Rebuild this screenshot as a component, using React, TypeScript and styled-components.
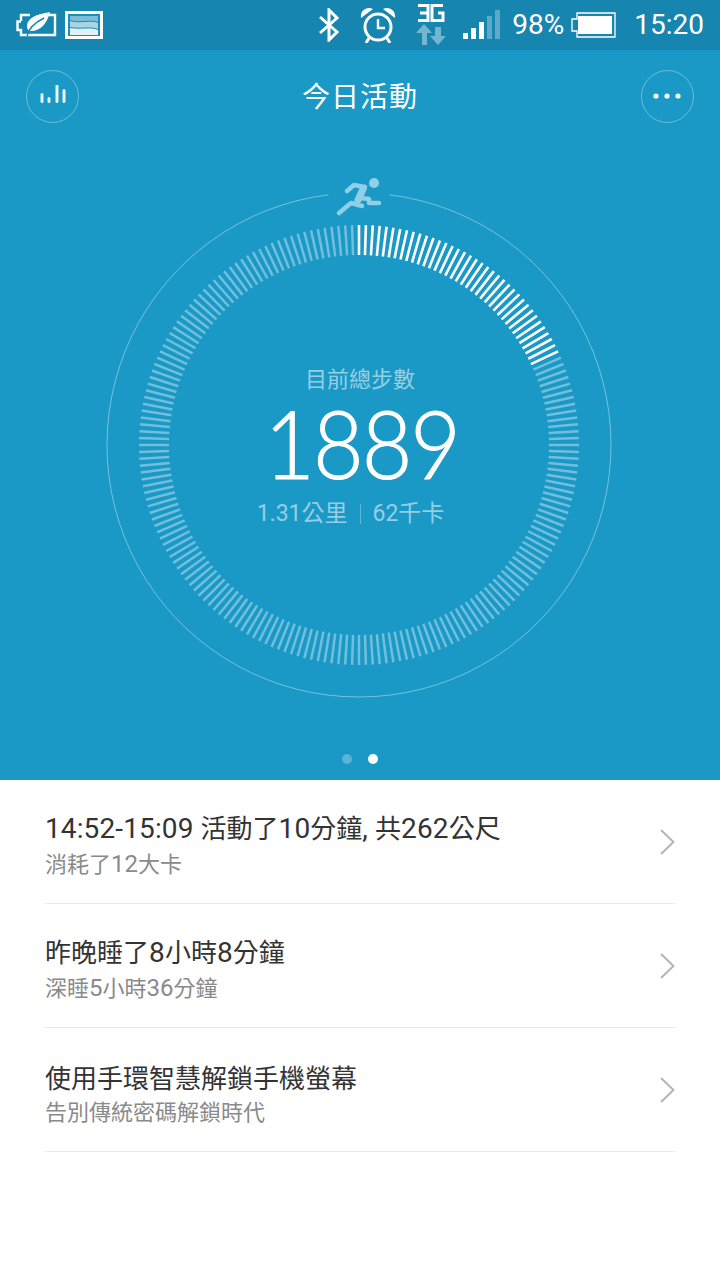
import styled, { createGlobalStyle } from 'styled-components';

const GlobalStyle = createGlobalStyle`
  html, body { margin: 0; padding: 0; background: #fff; }
  body { font-family: Roboto, "Noto Sans CJK TC", sans-serif; }
`;

const Page = styled.div`
  width: 720px;
  height: 1280px;
  overflow: hidden;
  display: flex;
  flex-direction: column;
  background: #fff;
`;

const StatusBar = styled.div`
  height: 50px;
  flex: none;
  padding-right: 16px;
  background: #1686b0;
  display: flex;
  align-items: center;
  color: #fff;
`;

const StatusIcon = styled.svg<{ $left: number }>`
  display: block;
  flex: none;
  margin-left: ${(p) => p.$left}px;
`;

const StatusText = styled.span<{ $left: number }>`
  font: 400 28px Roboto, sans-serif;
  margin-left: ${(p) => p.$left}px;
  line-height: 50px;
  margin-top: -1px;
`;

const Spacer = styled.div`
  flex: 1;
`;

const Hero = styled.section`
  height: 730px;
  flex: none;
  background: #1a98c6;
  display: flex;
  flex-direction: column;
  align-items: center;
`;

const TopBar = styled.header`
  width: 100%;
  box-sizing: border-box;
  height: 92px;
  padding: 0 26px;
  display: flex;
  align-items: center;
  justify-content: space-between;
`;

const RoundButton = styled.button`
  width: 53px;
  height: 53px;
  padding: 0;
  border-radius: 50%;
  border: 1px solid rgba(255, 255, 255, 0.35);
  background: transparent;
  display: flex;
  align-items: center;
  justify-content: center;
`;

const Title = styled.h1`
  margin: -2px 0 0;
  font: 400 28px "Noto Sans CJK TC", sans-serif;
  letter-spacing: 1px;
  color: #fff;
`;

const RingArea = styled.div`
  position: relative;
  width: 520px;
  height: 520px;
  margin-top: 43px;
  display: flex;
  flex-direction: column;
  align-items: center;
`;

const RingSvg = styled.svg`
  position: absolute;
  left: -1px;
  top: 0;
  overflow: visible;
`;

const RingLabel = styled.div`
  position: relative;
  margin-top: 176px;
  font: 400 22px/32px "Noto Sans CJK TC", sans-serif;
  color: rgba(255, 255, 255, 0.55);
`;

const StepCount = styled.div`
  position: relative;
  margin-top: 4px;
  margin-left: 3px;
  font: 300 94px/92px Lato, sans-serif;
  letter-spacing: -2.2px;
  -webkit-text-stroke: 0.9px #fff;
  color: #fff;
  transform: scaleX(0.93);
`;

const RingStats = styled.div`
  position: relative;
  width: 100%;
  margin-top: 10px;
  display: grid;
  grid-template-columns: 1fr auto 1fr;
  align-items: center;
  font: 400 23px/30px Roboto, "Noto Sans CJK TC", sans-serif;
  color: rgba(255, 255, 255, 0.55);
`;

const StatLeft = styled.span`
  text-align: right;
`;

const StatDivider = styled.span`
  width: 1px;
  height: 20px;
  margin: 0 12px;
  background: rgba(255, 255, 255, 0.3);
`;

const Pager = styled.div`
  margin-top: 49px;
  display: flex;
  gap: 16px;
`;

const PagerDot = styled.span<{ $active?: boolean }>`
  width: 10px;
  height: 10px;
  border-radius: 50%;
  background: ${(p) => (p.$active ? '#fff' : 'rgba(255, 255, 255, 0.28)')};
`;

const List = styled.ul`
  margin: 0;
  padding: 0 45px;
  list-style: none;
`;

const Row = styled.li`
  height: 124px;
  box-sizing: border-box;
  border-bottom: 1px solid #e8e8e8;
  display: flex;
  align-items: center;
  justify-content: space-between;
`;

const RowText = styled.div`
  padding-top: 5px;
  display: flex;
  flex-direction: column;
`;

const RowTitle = styled.div`
  font: 400 26px/36px "Noto Sans CJK TC", sans-serif;
  color: #333;
`;

const RowSub = styled.div`
  margin-top: -1px;
  font: 400 22px/32px "Noto Sans CJK TC", sans-serif;
  color: #8a8a8a;
`;

const TitleLatin = styled.span`
  font: 400 28px/36px Roboto, sans-serif;
  letter-spacing: 0.12px;
`;

const SubLatin = styled.span`
  font: 400 24px/32px Roboto, sans-serif;
`;

const Chevron = styled.svg`
  display: block;
  flex: none;
`;

const C = 260;
const TICKS = 200;
const DONE = 37;

function Ticks() {
  const lines = [];
  for (let i = 0; i < TICKS; i++) {
    const a = (i / TICKS) * Math.PI * 2;
    const s = Math.sin(a);
    const c = Math.cos(a);
    const on = i < DONE;
    lines.push(
      <line
        key={i}
        x1={C + s * 190}
        y1={C - c * 190}
        x2={C + s * 220}
        y2={C - c * 220}
        stroke="#fff"
        strokeOpacity={on ? 1 : 0.38}
        strokeWidth={on ? 2.6 : 2.5}
      />
    );
  }
  return <>{lines}</>;
}

function polar(r: number, deg: number) {
  const a = (deg * Math.PI) / 180;
  return `${C + Math.sin(a) * r} ${C - Math.cos(a) * r}`;
}

// digits and latin run bigger than the CJK in this font pairing
function mixed(text: string, Latin: typeof TitleLatin) {
  return text.split(/([\x00-\x7f]+)/).map((part, i) =>
    i % 2 ? <Latin key={i}>{part}</Latin> : part
  );
}

const rows = [
  { title: '14:52-15:09 活動了10分鐘, 共262公尺', sub: '消耗了12大卡' },
  { title: '昨晚睡了8小時8分鐘', sub: '深睡5小時36分鐘' },
  { title: '使用手環智慧解鎖手機螢幕', sub: '告別傳統密碼解鎖時代' },
];

export default function App() {
  return (
    <Page>
      <GlobalStyle />
      <StatusBar>
        <StatusIcon $left={16} width="41" height="26" viewBox="0 0 41 26">
          <path d="M5 9V3h9M28 3h11v20H5v-5H1.500V9.500H5" fill="none" stroke="#fff" strokeWidth="2.4" />
          <path d="M34 0C24 2 12 4 11 14c0 2 1 4 2 5C25 20 31 11 34 0z" fill="#fff" />
          <path d="M28 6C20 10 13 15 11 24" fill="none" stroke="#1686b0" strokeWidth="1.4" />
        </StatusIcon>
        <StatusIcon $left={8} width="38" height="28" viewBox="0 0 38 28">
          <rect x="1.500" y="1.500" width="35" height="25" fill="#1b8fb8" stroke="#fff" strokeWidth="3" />
          <path d="M5 5h28v6C26 8 14 12 5 9z" fill="#7dbdd6" />
          <path d="M5 10c9 3 21-1 28 2v6C26 15 14 18 5 16z" fill="#a9d4e5" />
          <path d="M5 17c9 2 21-1 28 2v5H5z" fill="#e2f1f6" />
        </StatusIcon>
        <Spacer />
        <StatusIcon $left={0} width="22" height="34" viewBox="0 0 22 34">
          <path d="M2 9l17 15-8 8V2l8 8L2 25" fill="none" stroke="#fff" strokeWidth="3" />
        </StatusIcon>
        <StatusIcon $left={20} width="36" height="36" viewBox="0 0 36 36">
          <circle cx="18" cy="20" r="13" fill="none" stroke="#fff" strokeWidth="3" />
          <path d="M18 12v9h7" fill="none" stroke="#fff" strokeWidth="2.400" />
          <path d="M1 11C0 4 6-1 13 2zM35 11c1-7-5-12-12-9z" fill="#fff" />
          <path d="M9 31l-3 5M27 31l3 5" stroke="#fff" strokeWidth="3" />
        </StatusIcon>
        <StatusIcon $left={20} width="30" height="42" viewBox="0 0 30 42">
          <path d="M2 1.500h10v15H2M4 9h8M27 1.500H16v15h11V9h-5" fill="none" stroke="#fff" strokeWidth="3" />
          <path d="M8 20l8 9h-5v12H6V29H0z" fill="#fff" fillOpacity="0.4" />
          <path d="M22 41l8-9h-5V23h-6v9h-5z" fill="#fff" fillOpacity="0.4" />
        </StatusIcon>
        <StatusIcon $left={17} width="38" height="30" viewBox="0 0 38 30">
          <rect x="0" y="23" width="5" height="6" fill="#fff" />
          <rect x="8" y="18" width="5" height="11" fill="#fff" />
          <rect x="16" y="12" width="5" height="17" fill="#fff" />
          <rect x="24" y="6" width="5" height="23" fill="#fff" fillOpacity="0.3" />
          <rect x="32" y="0" width="5" height="29" fill="#fff" fillOpacity="0.3" />
        </StatusIcon>
        <StatusText $left={11}>98%</StatusText>
        <StatusIcon $left={7} width="46" height="26" viewBox="0 0 46 26">
          <path d="M6 7V1h38v24H6v-6H1V7z" fill="none" stroke="#fff" strokeWidth="1.300" />
          <rect x="7" y="4" width="34" height="18" fill="#fff" />
        </StatusIcon>
        <StatusText $left={17}>15:20</StatusText>
      </StatusBar>

      <Hero>
        <TopBar>
          <RoundButton aria-label="stats">
            <svg width="28" height="22" viewBox="0 0 28 22">
              <path d="M3 9.500v7M10 13.500v3M18 .5v16M25 5.500v11" stroke="#fff" strokeOpacity="0.9" strokeWidth="3" strokeLinecap="round" />
            </svg>
          </RoundButton>
          <Title>今日活動</Title>
          <RoundButton aria-label="more">
            <svg width="28" height="6" viewBox="0 0 28 6">
              <circle cx="3" cy="3" r="2.600" fill="#fff" />
              <circle cx="14" cy="3" r="2.600" fill="#fff" />
              <circle cx="25" cy="3" r="2.600" fill="#fff" />
            </svg>
          </RoundButton>
        </TopBar>

        <RingArea>
          <RingSvg width="520" height="520" viewBox="0 0 520 520">
            <path
              d={`M ${polar(252, 7)} A 252 252 0 1 1 ${polar(252, -7)}`}
              fill="none"
              stroke="#fff"
              strokeOpacity="0.4"
              strokeWidth="1"
            />
            <Ticks />
            <g fill="none" stroke="#8fd0e6" strokeWidth="4.500" strokeLinecap="round" strokeLinejoin="round">
              <path d="M248 6l7-6 11 2-5 11 9 1v4h10" />
              <path d="M240 28l12-10 11 3" />
              <path d="M264 4l-5 11" strokeWidth="7" />
            </g>
            <circle cx="275" cy="-2" r="5" fill="#8fd0e6" />
          </RingSvg>
          <RingLabel>目前總步數</RingLabel>
          <StepCount>1889</StepCount>
          <RingStats>
            <StatLeft>1.31公里</StatLeft>
            <StatDivider />
            <span>62千卡</span>
          </RingStats>
        </RingArea>

        <Pager>
          <PagerDot />
          <PagerDot $active />
        </Pager>
      </Hero>

      <List>
        {rows.map((r) => (
          <Row key={r.title}>
            <RowText>
              <RowTitle>{mixed(r.title, TitleLatin)}</RowTitle>
              <RowSub>{mixed(r.sub, SubLatin)}</RowSub>
            </RowText>
            <Chevron width="15" height="26" viewBox="0 0 15 26">
              <path d="M1 1l12.500 12L1 25" fill="none" stroke="#b5b5b5" strokeWidth="2" />
            </Chevron>
          </Row>
        ))}
      </List>
    </Page>
  );
}
